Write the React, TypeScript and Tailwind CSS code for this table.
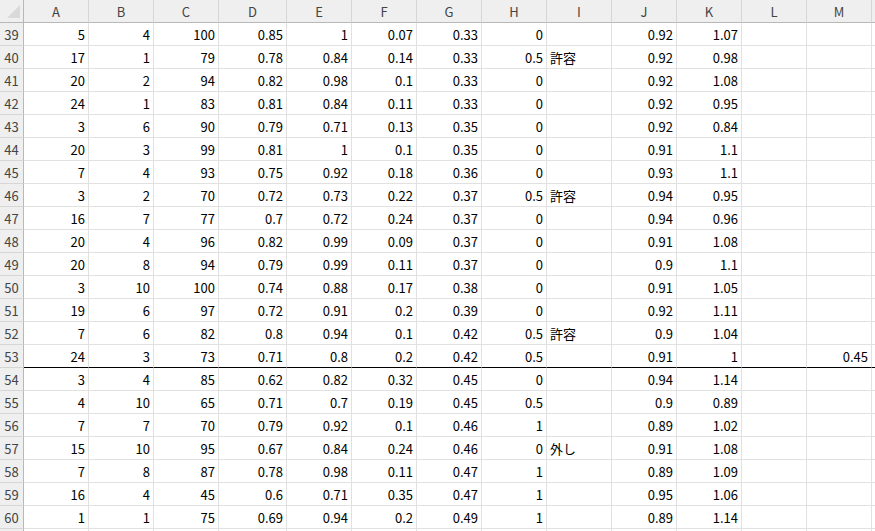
import React from "react";

const cols = ["A", "B", "C", "D", "E", "F", "G", "H", "I", "J", "K", "L", "M"];
const widths = [65, 65, 65, 68, 65, 65, 65, 65, 65, 65, 65, 65, 65];

type Cell = string | number;
const data: [number, Cell[]][] = [
  [39, [5, 4, 100, 0.85, 1, 0.07, 0.33, 0, "", 0.92, 1.07, "", ""]],
  [40, [17, 1, 79, 0.78, 0.84, 0.14, 0.33, 0.5, "許容", 0.92, 0.98, "", ""]],
  [41, [20, 2, 94, 0.82, 0.98, 0.1, 0.33, 0, "", 0.92, 1.08, "", ""]],
  [42, [24, 1, 83, 0.81, 0.84, 0.11, 0.33, 0, "", 0.92, 0.95, "", ""]],
  [43, [3, 6, 90, 0.79, 0.71, 0.13, 0.35, 0, "", 0.92, 0.84, "", ""]],
  [44, [20, 3, 99, 0.81, 1, 0.1, 0.35, 0, "", 0.91, 1.1, "", ""]],
  [45, [7, 4, 93, 0.75, 0.92, 0.18, 0.36, 0, "", 0.93, 1.1, "", ""]],
  [46, [3, 2, 70, 0.72, 0.73, 0.22, 0.37, 0.5, "許容", 0.94, 0.95, "", ""]],
  [47, [16, 7, 77, 0.7, 0.72, 0.24, 0.37, 0, "", 0.94, 0.96, "", ""]],
  [48, [20, 4, 96, 0.82, 0.99, 0.09, 0.37, 0, "", 0.91, 1.08, "", ""]],
  [49, [20, 8, 94, 0.79, 0.99, 0.11, 0.37, 0, "", 0.9, 1.1, "", ""]],
  [50, [3, 10, 100, 0.74, 0.88, 0.17, 0.38, 0, "", 0.91, 1.05, "", ""]],
  [51, [19, 6, 97, 0.72, 0.91, 0.2, 0.39, 0, "", 0.92, 1.11, "", ""]],
  [52, [7, 6, 82, 0.8, 0.94, 0.1, 0.42, 0.5, "許容", 0.9, 1.04, "", ""]],
  [53, [24, 3, 73, 0.71, 0.8, 0.2, 0.42, 0.5, "", 0.91, 1, "", 0.45]],
  [54, [3, 4, 85, 0.62, 0.82, 0.32, 0.45, 0, "", 0.94, 1.14, "", ""]],
  [55, [4, 10, 65, 0.71, 0.7, 0.19, 0.45, 0.5, "", 0.9, 0.89, "", ""]],
  [56, [7, 7, 70, 0.79, 0.92, 0.1, 0.46, 1, "", 0.89, 1.02, "", ""]],
  [57, [15, 10, 95, 0.67, 0.84, 0.24, 0.46, 0, "外し", 0.91, 1.08, "", ""]],
  [58, [7, 8, 87, 0.78, 0.98, 0.11, 0.47, 1, "", 0.89, 1.09, "", ""]],
  [59, [16, 4, 45, 0.6, 0.71, 0.35, 0.47, 1, "", 0.95, 1.06, "", ""]],
  [60, [1, 1, 75, 0.69, 0.94, 0.2, 0.49, 1, "", 0.89, 1.14, "", ""]],
  [61, ["", "", "", "", "", "", "", "", "", "", "", "", ""]],
];

export default function App() {
  return (
    <div className="w-[875px] h-[531px] overflow-hidden bg-white font-['Noto_Sans_CJK_JP',sans-serif] text-[13px] text-black leading-none">
      {/* header row */}
      <div className="flex h-[23px]">
        <div className="w-[24px] shrink-0 h-full bg-[#efefef] border-r border-b border-[#b8b8b8] relative">
          <svg className="absolute left-[7px] top-[5px]" width="13" height="13" viewBox="0 0 13 13">
            <polygon points="13,0 13,13 0,13" fill="#d9d9d9" />
          </svg>
        </div>
        {cols.map((c, i) => (
          <div
            key={c}
            style={{ width: widths[i] }}
            className="shrink-0 h-full bg-[#efefef] border-r border-r-[#d6d6d6] border-b border-b-[#b8b8b8] flex items-center justify-center text-[#444]"
          >
            {c}
          </div>
        ))}
        <div className="flex-1 h-full bg-[#efefef] border-b border-[#b8b8b8]" />
      </div>
      {data.map(([rn, cells]) => {
        const thick = rn === 53;
        return (
          <div key={rn} className="flex h-[23px]">
            <div className="w-[24px] shrink-0 h-full bg-[#efefef] border-r border-r-[#b8b8b8] border-b border-b-[#d6d6d6] flex items-center justify-center text-[#444]">
              {rn <= 60 ? rn : ""}
            </div>
            {cells.map((v, i) => {
              const isText = typeof v === "string" && v !== "";
              return (
                <div
                  key={i}
                  style={{ width: widths[i] }}
                  className={
                    "shrink-0 h-full border-r border-r-[#e1e1e1] border-b flex items-center px-[3px] whitespace-nowrap " +
                    (thick ? "border-b-black " : "border-b-[#e1e1e1] ") +
                    (isText ? "justify-start" : "justify-end")
                  }
                >
                  {v === "" ? "" : String(v)}
                </div>
              );
            })}
            <div className={"flex-1 h-full border-b " + (thick ? "border-b-black" : "border-b-[#e1e1e1]")} />
          </div>
        );
      })}
    </div>
  );
}
